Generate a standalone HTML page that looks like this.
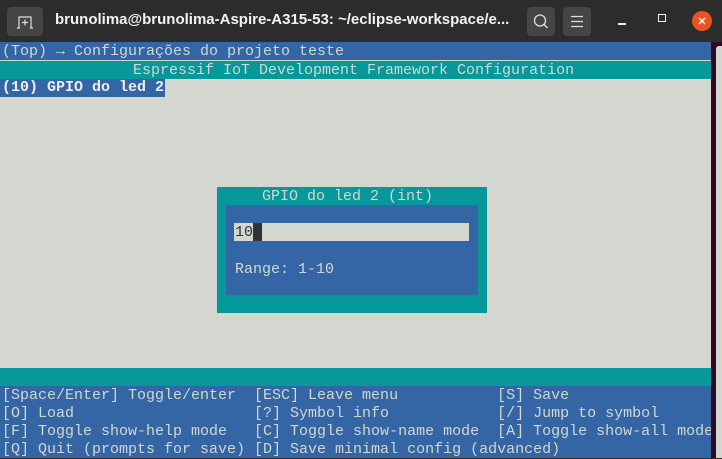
<!DOCTYPE html>
<html><head><meta charset="utf-8"><style>
*{margin:0;padding:0;box-sizing:border-box}
body{width:722px;height:458px;overflow:hidden;background:#2c2c2c;position:relative;font-family:"Liberation Mono","DejaVu Sans Mono",monospace}
.tb{position:absolute;left:0;top:0;width:722px;height:42px;background:#2c2c2c}
.btn{position:absolute;top:7px;width:28px;height:29px;background:#454545;border-radius:4px}
.title{position:absolute;left:55px;top:11px;color:#f2f2f2;font:bold 15px "Liberation Sans","DejaVu Sans",sans-serif;letter-spacing:0}
.term{position:absolute;left:0;top:42px;width:711px;height:416px;background:#d3d7cf;font-size:15px;line-height:18px;color:#d3d7cf;white-space:pre}
.row{position:absolute;left:2px;height:18px;top:0}
.side{position:absolute;left:711px;top:42px;width:11px;height:416px;background:#300a24}
.sb{position:absolute;left:716px;top:46px;width:6px;height:412px;background:#d3d7cf;border-radius:3px 0 0 0}
</style></head><body>
<div class="tb">
 <div class="btn" style="left:7px;width:36px">
  <svg width="36" height="29" viewBox="0 0 36 29"><path d="M12 21V10h12v11M18 12.5v6M15 15.5h6M10 21h3M23 21h3" stroke="#ddd" stroke-width="1.2" fill="none"/></svg>
 </div>
 <div class="title">brunolima@brunolima-Aspire-A315-53: ~/eclipse-workspace/e...</div>
 <div class="btn" style="left:527px">
  <svg width="28" height="29"><circle cx="13" cy="13.5" r="5.5" stroke="#ddd" stroke-width="1.3" fill="none"/><path d="M17 17.5l3.5 3.5" stroke="#ddd" stroke-width="1.4"/></svg>
 </div>
 <div class="btn" style="left:563px">
  <svg width="28" height="29"><path d="M8 9.5h12M8 14.5h12M8 19.5h12" stroke="#ddd" stroke-width="1.2"/></svg>
 </div>
 <div style="position:absolute;left:618px;top:23px;width:8px;height:1.5px;background:#eee"></div>
 <div style="position:absolute;left:658px;top:14px;width:8px;height:8px;border:1.3px solid #eee"></div>
 <div style="position:absolute;left:692px;top:11px;width:20px;height:20px;border-radius:50%;background:#e95420">
  <svg width="20" height="20"><path d="M7 7l6 6M13 7l-6 6" stroke="#fff" stroke-width="1.4"/></svg>
 </div>
</div>
<div class="term">
 <div style="position:absolute;left:0;top:0;width:711px;height:18px;background:#3465a4"></div>
 <div class="row" style="top:1px">(Top) → Configurações do projeto teste</div>
 <div style="position:absolute;left:0;top:19px;width:711px;height:18px;background:#06989a"></div>
 <div class="row" style="top:20px;left:133px">Espressif IoT Development Framework Configuration</div>
 <div class="row" style="top:37px;left:0;padding-left:2px;background:#3465a4;color:#eeeeec;font-weight:bold;width:165px">(10) GPIO do led 2</div>

 <div style="position:absolute;left:217px;top:145px;width:270px;height:126px;background:#06989a"></div>
 <div class="row" style="top:146px;left:262px">GPIO do led 2 (int)</div>
 <div style="position:absolute;left:226px;top:163px;width:252px;height:90px;background:#3465a4"></div>
 <div style="position:absolute;left:234px;top:181px;width:235px;height:18px;background:#d3d7cf"></div>
 <div style="position:absolute;left:253px;top:181px;width:9px;height:18px;background:#2e3436"></div>
 <div class="row" style="top:182px;left:235px;color:#2e3436">10</div>
 <div class="row" style="top:219px;left:235px">Range: 1-10</div>

 <div style="position:absolute;left:0;top:326px;width:711px;height:18px;background:#06989a"></div>
 <div style="position:absolute;left:0;top:344px;width:711px;height:72px;background:#3465a4"></div>
 <div class="row" style="top:345px">[Space/Enter] Toggle/enter  [ESC] Leave menu           [S] Save</div>
 <div class="row" style="top:363px">[O] Load                    [?] Symbol info            [/] Jump to symbol</div>
 <div class="row" style="top:381px">[F] Toggle show-help mode   [C] Toggle show-name mode  [A] Toggle show-all mode</div>
 <div class="row" style="top:399px">[Q] Quit (prompts for save) [D] Save minimal config (advanced)</div>
</div>
<div class="side"></div>
<div class="sb"></div>
</body></html>
